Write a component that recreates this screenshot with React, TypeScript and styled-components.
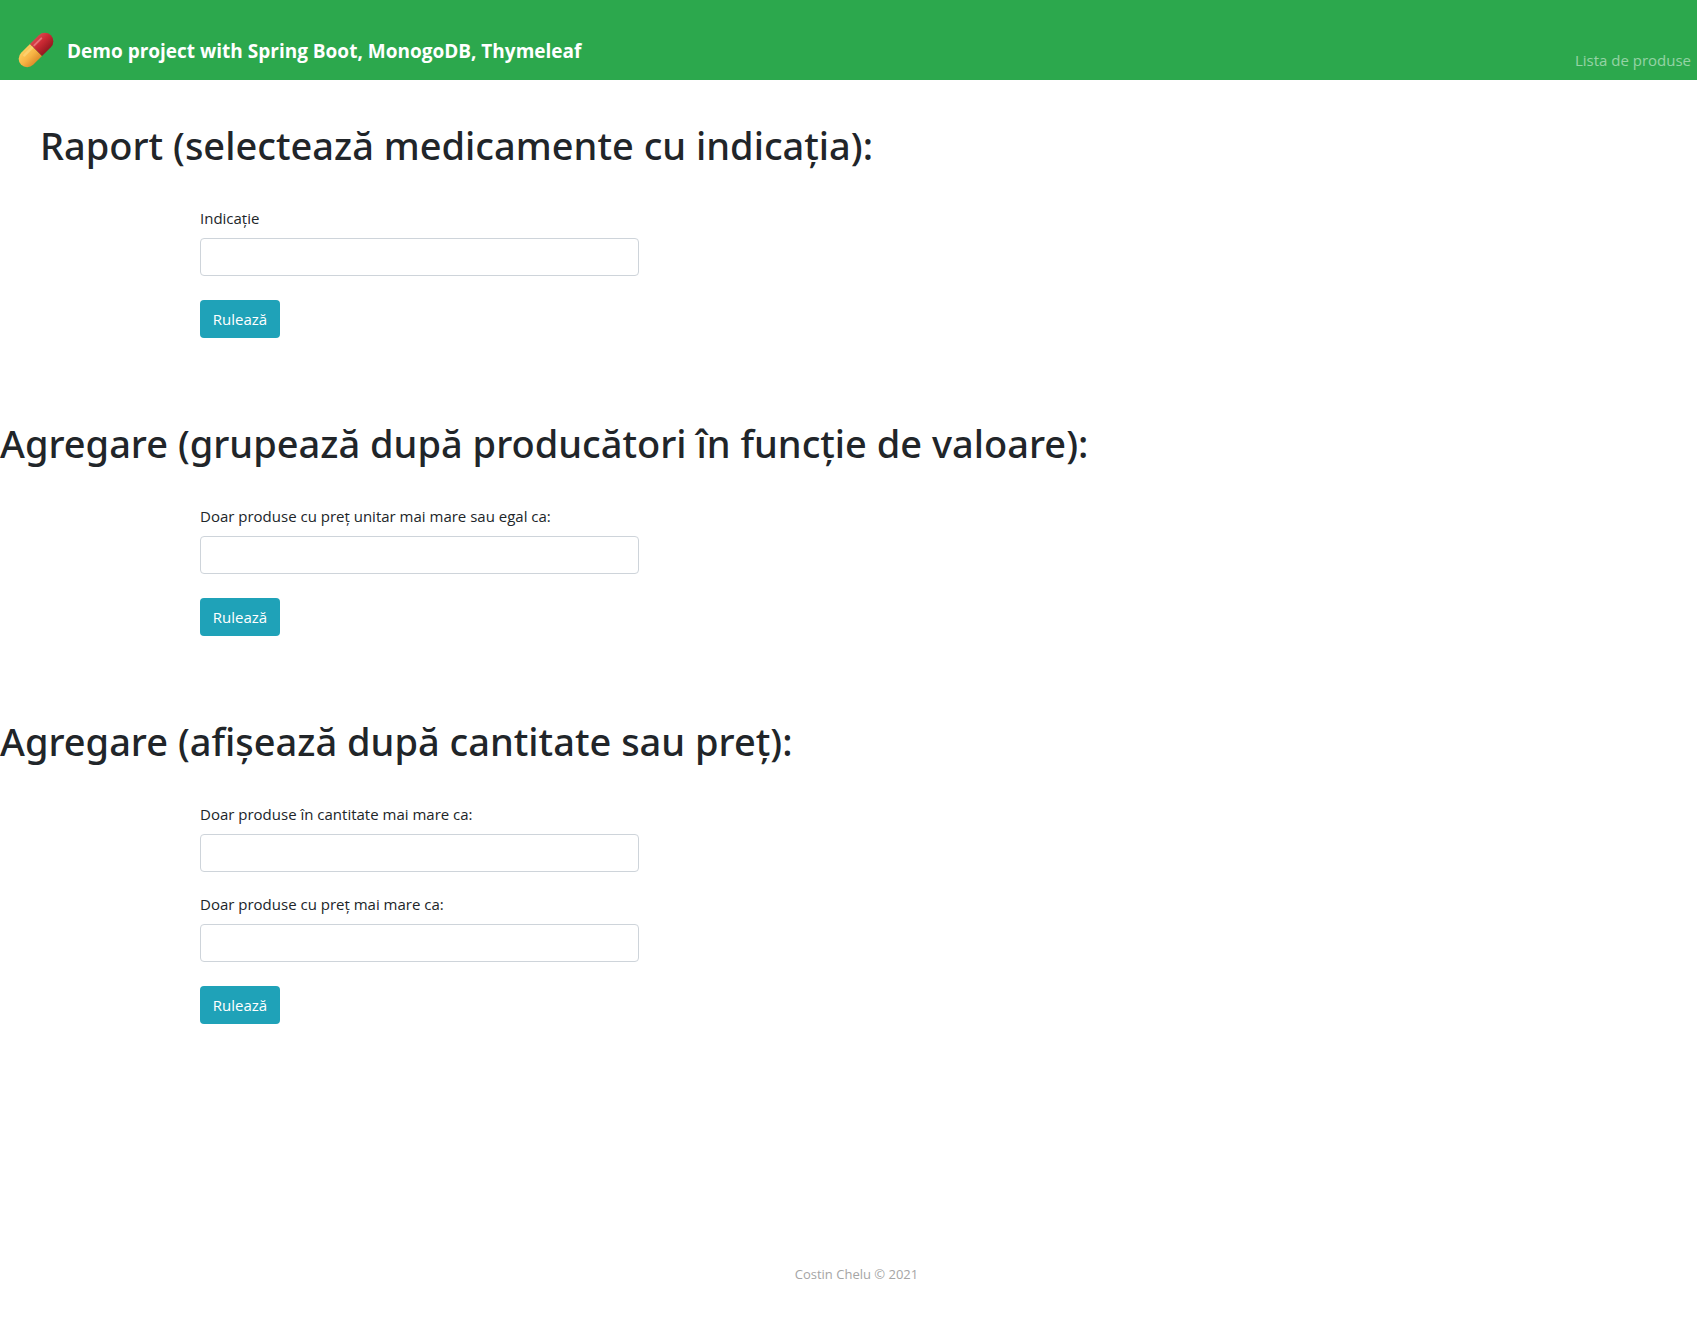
import React, { useId } from 'react';
import styled, { createGlobalStyle } from 'styled-components';

const GlobalStyle = createGlobalStyle`
  *, *::before, *::after { box-sizing: border-box; }
  body {
    margin: 0;
    background: #fff;
    color: #212529;
    font-family: "Open Sans", "Noto Sans", sans-serif;
    font-size: 15px;
    line-height: 24px;
  }
`;

const Page = styled.div`
  display: flex;
  flex-direction: column;
  min-height: 100vh;
`;

const NavBar = styled.nav`
  display: flex;
  justify-content: space-between;
  align-items: flex-end;
  height: 80px;
  padding: 0 6px 8px 16px;
  background: #2ca84d;
`;

const Brand = styled.a`
  display: flex;
  align-items: flex-start;
  gap: 11px;
  color: #fff;
  font-size: 19px;
  font-weight: 700;
  line-height: 38px;
  text-decoration: none;
`;

const NavLink = styled.a`
  color: rgba(255, 255, 255, 0.5);
  font-size: 15px;
  text-decoration: none;
`;

const Main = styled.main`
  flex: 1;
  padding-top: 41px;
`;

const Section = styled.section`
  margin-bottom: 81px;
`;

const Heading = styled.h1<{ $indented?: boolean }>`
  margin: 0 0 37px;
  padding-left: ${(p) => (p.$indented ? 40 : 0)}px;
  font-family: "Noto Sans", "Open Sans", sans-serif;
  font-size: 38px;
  font-weight: 500;
  line-height: 48px;
`;

const Form = styled.form`
  width: 439px;
  max-width: calc(100% - 200px);
  margin-left: 200px;
`;

const Field = styled.div`
  display: flex;
  flex-direction: column;
  gap: 8px;
  margin-bottom: 20px;
`;

const Input = styled.input`
  width: 100%;
  height: 38px;
  padding: 6px 12px;
  border: 1px solid #ced4da;
  border-radius: 4px;
  background: #fff;
  color: #495057;
  font: inherit;
`;

const Button = styled.button`
  display: block;
  min-width: 80px;
  height: 38px;
  margin-top: 24px;
  padding: 0 12px;
  border: 0;
  border-radius: 4px;
  background: #1fa2b8;
  color: #fff;
  font: inherit;
  cursor: pointer;
`;

const Footer = styled.footer`
  padding: 0 0 37px 16px;
  color: #a5a5a5;
  font-size: 13px;
  text-align: center;
`;

function PillLogo() {
  return (
    <svg width="40" height="40" viewBox="0 0 40 40" aria-hidden="true">
      <defs>
        <linearGradient id="pillRed" x1="0" y1="0" x2="0" y2="1">
          <stop offset="0" stopColor="#d9444c" />
          <stop offset="0.45" stopColor="#c92832" />
          <stop offset="1" stopColor="#941820" />
        </linearGradient>
        <linearGradient id="pillYellow" x1="0" y1="0" x2="0" y2="1">
          <stop offset="0" stopColor="#fccb5b" />
          <stop offset="0.5" stopColor="#f8b545" />
          <stop offset="1" stopColor="#df8d2b" />
        </linearGradient>
      </defs>
      <g transform="translate(20 18) rotate(-45)">
        <path d="M0-8.5H-12.5A8.5 8.5 0 0 0-12.5 8.5H0Z" fill="url(#pillYellow)" />
        <path d="M0-8.5H12.5A8.5 8.5 0 0 1 12.5 8.5H0Z" fill="url(#pillRed)" />
        <path d="M-12-4.5H-1" stroke="#ffe08a" strokeWidth="2.5" strokeLinecap="round" opacity="0.5" />
        <path d="M2-4.5H12" stroke="#f08a8e" strokeWidth="2" strokeLinecap="round" opacity="0.7" />
      </g>
    </svg>
  );
}

function TextField({ label }: { label: string }) {
  const id = useId();
  return (
    <Field>
      <label htmlFor={id}>{label}</label>
      <Input id={id} type="text" />
    </Field>
  );
}

interface ReportProps {
  title: string;
  fields: string[];
  indented?: boolean;
}

function Report({ title, fields, indented }: ReportProps) {
  return (
    <Section>
      <Heading $indented={indented}>{title}</Heading>
      <Form onSubmit={(e) => e.preventDefault()}>
        {fields.map((f) => (
          <TextField key={f} label={f} />
        ))}
        <Button type="submit">Rulează</Button>
      </Form>
    </Section>
  );
}

export default function App() {
  return (
    <Page>
      <GlobalStyle />
      <NavBar>
        <Brand href="#">
          <PillLogo />
          Demo project with Spring Boot, MonogoDB, Thymeleaf
        </Brand>
        <NavLink href="#">Lista de produse</NavLink>
      </NavBar>
      <Main>
        <Report indented title="Raport (selectează medicamente cu indicația):" fields={['Indicație']} />
        <Report
          title="Agregare (grupează după producători în funcție de valoare):"
          fields={['Doar produse cu preț unitar mai mare sau egal ca:']}
        />
        <Report
          title="Agregare (afișează după cantitate sau preț):"
          fields={['Doar produse în cantitate mai mare ca:', 'Doar produse cu preț mai mare ca:']}
        />
      </Main>
      <Footer>Costin Chelu © 2021</Footer>
    </Page>
  );
}
